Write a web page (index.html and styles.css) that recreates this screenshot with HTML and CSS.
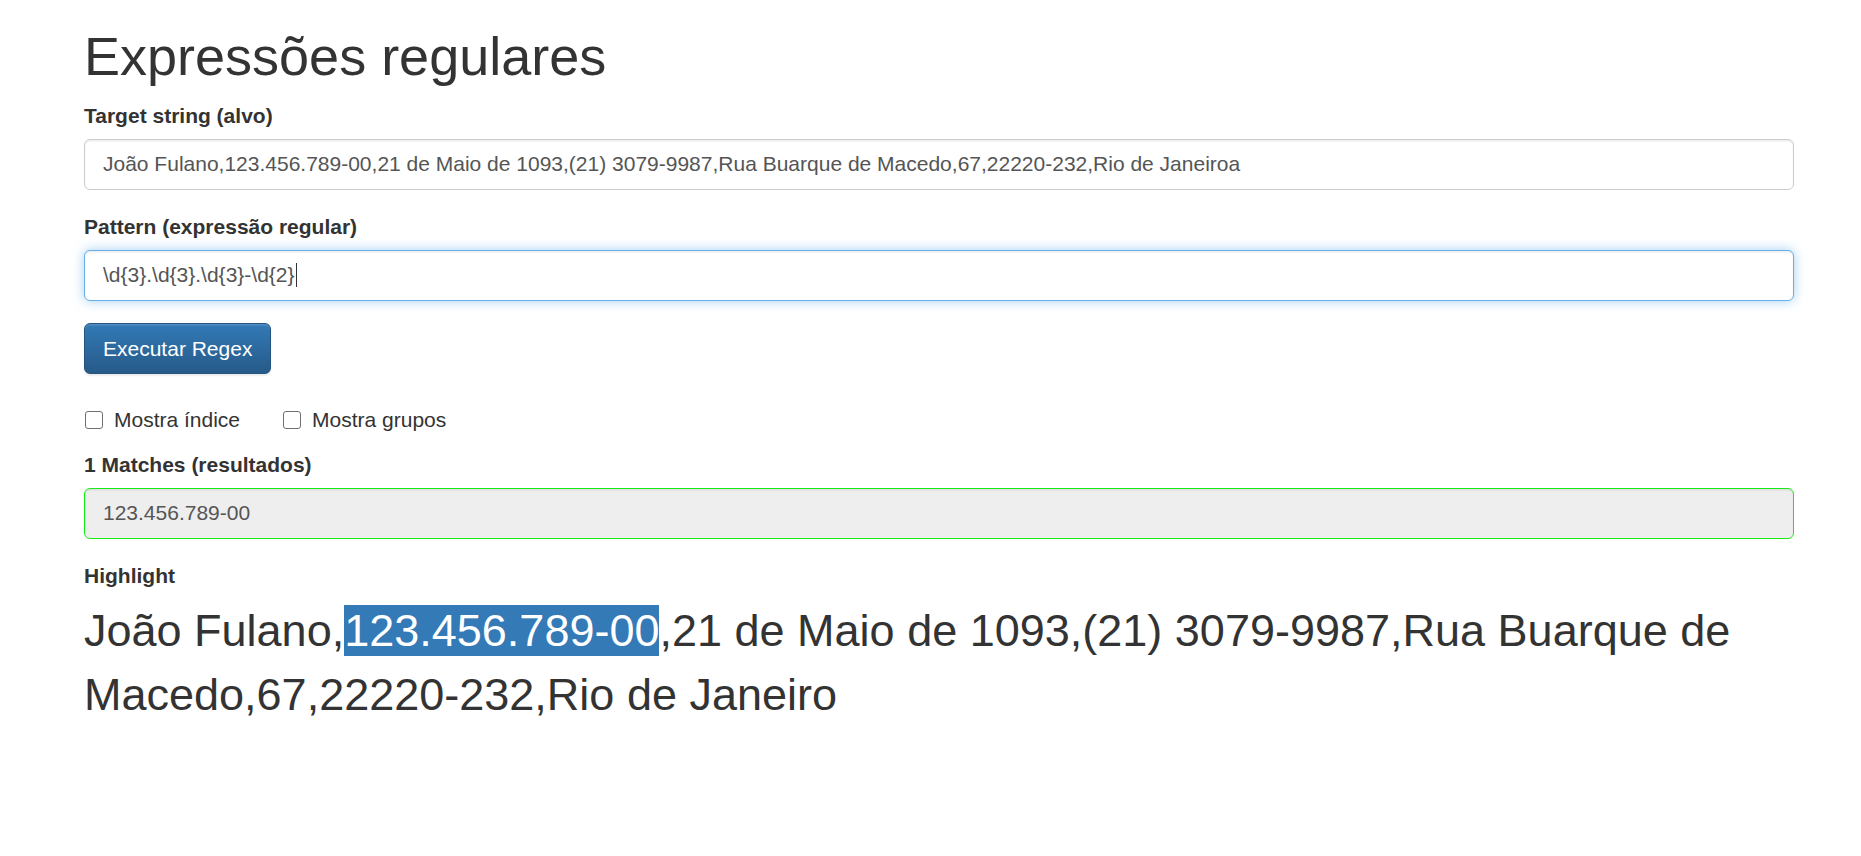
FILE: index.html
```html
<!DOCTYPE html>
<html lang="pt-BR">
<head>
<meta charset="utf-8">
<title>Expressões regulares</title>
<link rel="stylesheet" href="styles.css">
</head>
<body>
<div class="container">
  <h1 class="title">Expressões regulares</h1>
  <form class="regex-form" onsubmit="return false">
    <div class="form-group">
      <label class="field-label" for="target">Target string (alvo)</label>
      <input class="form-control" id="target" type="text" value="João Fulano,123.456.789-00,21 de Maio de 1093,(21) 3079-9987,Rua Buarque de Macedo,67,22220-232,Rio de Janeiroa">
    </div>
    <div class="form-group">
      <label class="field-label" for="pattern">Pattern (expressão regular)</label>
      <div class="form-control focused"><span class="pattern-text">\d{3}.\d{3}.\d{3}-\d{2}</span><span class="caret"></span></div>
    </div>
    <div class="button-row">
      <button class="btn-primary" type="button">Executar Regex</button>
    </div>
    <div class="checks">
      <label class="check"><span class="box"></span>Mostra índice</label>
      <label class="check"><span class="box"></span>Mostra grupos</label>
    </div>
    <div class="form-group">
      <label class="field-label">1 Matches (resultados)</label>
      <div class="form-control readonly">123.456.789-00</div>
    </div>
    <div class="highlight-group">
      <label class="field-label">Highlight</label>
      <p class="highlight">João Fulano,<span class="mark">123.456.789-00</span>,21 de Maio de 1093,(21) 3079-9987,Rua Buarque de Macedo,67,22220-232,Rio de Janeiro</p>
    </div>
  </form>
</div>
</body>
</html>
```
FILE: styles.css
```css
* { box-sizing: border-box; }
html, body {
  margin: 0;
  padding: 0;
  background: #fff;
}
body {
  font-family: "Liberation Sans", Arial, Helvetica, sans-serif;
  font-size: 21px;
  line-height: 30px;
  color: #333;
}
.container {
  width: 1794px;
  padding-left: 84px;
}
.title {
  font-size: 54px;
  font-weight: 500;
  line-height: 1.1;
  margin: 27px 0 15px;
}
.form-group {
  margin-bottom: 22.5px;
}
.field-label {
  display: block;
  font-weight: bold;
  margin-bottom: 7.5px;
}
.form-control {
  display: block;
  width: 100%;
  height: 51px;
  padding: 9px 18px;
  font-family: inherit;
  font-size: 21px;
  line-height: 30px;
  color: #555;
  background: #fff;
  border: 1px solid #ccc;
  border-radius: 6px;
  box-shadow: inset 0 1.5px 1.5px rgba(0,0,0,.075);
  outline: none;
}
.form-control.focused {
  border-color: #66afe9;
  box-shadow: inset 0 1.5px 1.5px rgba(0,0,0,.075), 0 0 12px rgba(102,175,233,.6);
  display: flex;
  align-items: center;
}
.caret {
  display: inline-block;
  width: 1px;
  height: 24px;
  background: #333;
  margin-left: 1px;
}
.form-control.readonly {
  background: #eee;
  border: 1px solid #18ec18;
}
.button-row {
  margin-bottom: 31px;
}
.btn-primary {
  font-family: inherit;
  font-size: 21px;
  line-height: 30px;
  height: 51px;
  padding: 9px 18px;
  color: #fff;
  background-image: linear-gradient(to bottom, #337ab7 0, #265a88 100%);
  border: 1px solid #245580;
  border-radius: 6px;
  box-shadow: inset 0 1.5px 0 rgba(255,255,255,.15), 0 1.5px 1.5px rgba(0,0,0,.075);
  cursor: pointer;
}
.checks {
  display: flex;
  gap: 42px;
  margin-bottom: 15px;
}
.check {
  display: flex;
  align-items: center;
  gap: 11px;
  font-weight: normal;
}
.box {
  display: inline-block;
  width: 18px;
  height: 18px;
  margin-left: 1px;
  border: 1.5px solid #6f6f6f;
  border-radius: 3px;
  background: #fff;
}
.highlight {
  font-size: 45px;
  line-height: 64.3px;
  margin: 0;
}
.mark {
  background: #337ab7;
  color: #fff;
}
```
